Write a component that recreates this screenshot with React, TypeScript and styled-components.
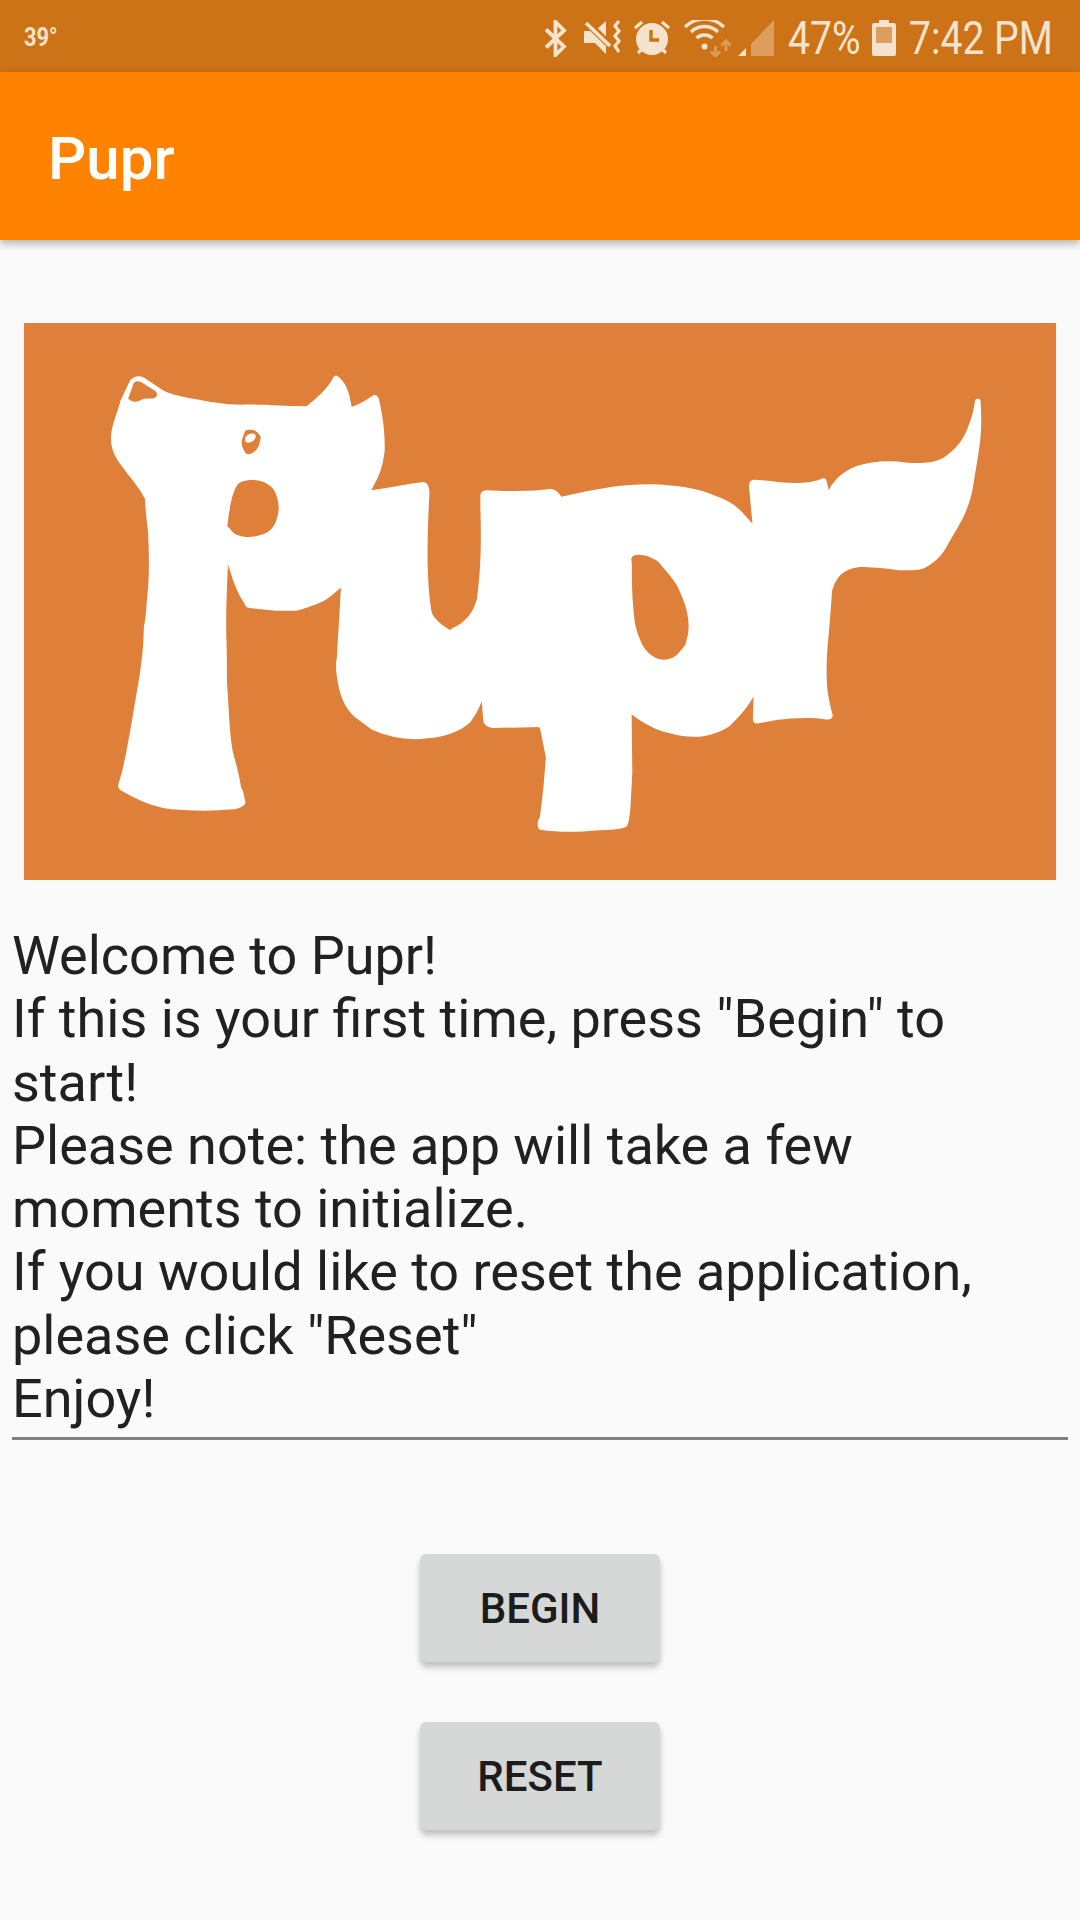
import React from "react";
import styled, { createGlobalStyle } from "styled-components";

const GlobalStyle = createGlobalStyle`
  html, body {
    margin: 0;
    padding: 0;
    background: #fafafa;
  }
  * {
    box-sizing: border-box;
  }
`;

const Screen = styled.div`
  width: 1080px;
  height: 1920px;
  background: #fafafa;
  font-family: Roboto, "Liberation Sans", sans-serif;
  overflow: hidden;
`;

const StatusBar = styled.div`
  height: 72px;
  background: #cb7316;
  color: #f6e3cd;
  display: flex;
  align-items: center;
  padding: 4px 28px 0 24px;
`;

const Temp = styled.span`
  font-size: 26px;
  font-weight: 700;
  width: 36px;
  margin-top: -2px;
  margin-right: auto;
  white-space: nowrap;
  transform: scaleX(0.84);
  transform-origin: left center;
`;

const StatusText = styled.span<{ $w: number; $ml: number }>`
  width: ${(p) => p.$w}px;
  margin-left: ${(p) => p.$ml}px;
  font-size: 46px;
  line-height: 52px;
  white-space: nowrap;
  transform: scaleX(0.85);
  transform-origin: left center;
`;

const StatusIcon = styled.svg<{ $ml?: number }>`
  display: block;
  flex: none;
  margin-left: ${(p) => p.$ml ?? 0}px;
`;

const AppBar = styled.header`
  height: 168px;
  background: #ff8300;
  box-shadow: 0 4px 8px rgba(0, 0, 0, 0.28);
  display: flex;
  align-items: center;
  padding: 4px 0 0 48px;
`;

const Title = styled.h1`
  margin: 0;
  color: #fff;
  font-size: 60px;
  font-weight: 500;
`;

const Content = styled.main`
  padding: 83px 12px 0;
`;

const Logo = styled.svg`
  display: block;
  width: 1032px;
  height: 557px;
  margin: 0 12px;
  background: #df803a;
`;

const Message = styled.div`
  margin-top: 44px;
  padding-bottom: 7px;
  border-bottom: 3px solid #808080;
  color: #212121;
  font-size: 54px;
  line-height: 63.3px;
`;

const Actions = styled.div`
  margin-top: 114px;
  display: flex;
  flex-direction: column;
  align-items: center;
  gap: 60px;
`;

const ActionButton = styled.button`
  width: 240px;
  height: 108px;
  border: 0;
  border-radius: 6px;
  background: #d6d7d7;
  color: #1c1c1c;
  font-family: inherit;
  font-size: 42px;
  font-weight: 500;
  box-shadow: 0 5px 6px rgba(0, 0, 0, 0.24);
`;

const DIM = "#dc9e5c";
const CREAM = "#f6e3cd";
const BAR = "#cb7316";

const StatusIcons = () => (
  <>
    <StatusIcon width={23} height={37} viewBox="0 0 23 37" fill="none" stroke={CREAM} strokeWidth={3.8}>
      <path d="M2 9.5 L20 26.5 L11.5 35 V2 L20 10.5 L2 27.5" />
    </StatusIcon>
    <StatusIcon $ml={17} width={38} height={36} viewBox="0 0 38 36" fill={CREAM}>
      <path d="M0 11 H11 L22 1 V34 L11 23 H0 Z" />
      <path d="M1 1 L28 27" stroke={BAR} strokeWidth={7} />
      <path d="M2 3 L26 26" stroke={CREAM} strokeWidth={3.6} />
      <path d="M35 1 L31 6 L35 11 L31 16 L35 21 L31 26 L35 32" fill="none" stroke={CREAM} strokeWidth={3.2} />
    </StatusIcon>
    <StatusIcon $ml={12} width={36} height={36} viewBox="0 0 36 36" fill={CREAM}>
      <circle cx="18" cy="19" r="16" />
      <path d="M1 8 L8 2 M28 2 L35 8 M4 33 L8 29 M28 29 L32 33" stroke={CREAM} strokeWidth={3.2} />
      <path d="M17 10 V20 H25" fill="none" stroke={BAR} strokeWidth={3.4} />
    </StatusIcon>
    <StatusIcon $ml={14} width={48} height={37} viewBox="0 0 48 37" fill="none">
      <circle cx="20.5" cy="26.5" r="3" fill={CREAM} />
      <path d="M12.5 18 A12 12 0 0 1 28.5 18 M7 12 A19.5 19.5 0 0 1 34 12 M1 7 A28 28 0 0 1 40 7" stroke={CREAM} strokeWidth={3.4} />
      <path d="M31.5 26 V36 M27 31.5 L31.5 36 L36 31.5 M42 31 V21 M37.5 25.5 L42 21 L46.5 25.5" stroke={DIM} strokeWidth={2.8} />
    </StatusIcon>
    <StatusIcon $ml={6} width={36} height={36} viewBox="0 0 36 36">
      <path d="M13 36 V24 L36 0 V36 Z" fill={DIM} />
      <path d="M0 36 L8 28 V36 Z" fill={CREAM} />
    </StatusIcon>
    <StatusText $w={70} $ml={14}>47%</StatusText>
    <StatusIcon $ml={14} width={24} height={36} viewBox="0 0 24 36">
      <path d="M7 0 H17 V3 H22 Q24 3 24 5 V34 Q24 36 22 36 H2 Q0 36 0 34 V5 Q0 3 2 3 H7 Z" fill={CREAM} />
      <rect x="4" y="7" width="16" height="16" fill={DIM} />
    </StatusIcon>
    <StatusText $w={143} $ml={13}>7:42 PM</StatusText>
  </>
);

// traced from the reference in two halves that meet at x=540
const PuprLogo = () => (
  <Logo viewBox="24 323 1032 557">
    <g transform="translate(0 310) scale(0.3444 0.3699)">
      <path
        fill="#fff"
        d="M378 190 C390 178 405 176 420 184 L465 212 C490 228 520 232 560 240 C610 248 650 256 700 256 C770 254 840 262 890 260 C920 238 950 215 968 182 C972 176 978 176 985 182 C1010 205 1015 230 1021 262 C1045 255 1065 243 1085 230 C1092 228 1098 232 1100 240 C1112 290 1118 330 1117 380 C1112 420 1104 445 1078 487 C1130 482 1180 470 1230 465 C1240 466 1248 478 1247 495 C1243 560 1240 640 1242 700 C1244 750 1248 790 1254 820 C1265 840 1285 853 1307 865 C1320 855 1330 855 1345 842 C1365 828 1378 805 1385 780 C1392 730 1396 680 1396 620 C1397 580 1394 540 1395 500 C1397 490 1405 487 1415 487 C1460 490 1520 490 1575 487 L1575 1127 L1430 1130 C1415 1128 1405 1122 1403 1110 L1399 1058 C1390 1080 1378 1100 1365 1115 C1335 1140 1290 1155 1240 1158 C1190 1166 1130 1155 1080 1135 L1030 1100 C1000 1075 985 1040 978 990 C975 970 975 955 978 940 L985 830 L990 750 C970 765 950 785 925 793 C900 802 885 808 860 813 L800 813 L720 805 C712 802 710 795 708 790 C685 760 675 725 662 688 C658 760 656 830 657 880 C660 950 658 980 660 1020 C665 1080 665 1130 675 1190 C685 1225 695 1260 700 1290 C708 1300 708 1315 713 1330 C712 1340 700 1345 680 1350 C620 1355 560 1355 500 1350 C450 1345 400 1325 350 1298 C342 1292 342 1285 346 1275 C360 1235 370 1180 385 1100 C395 1040 410 980 416 900 L418 855 C425 830 425 790 430 750 C434 700 432 640 430 600 C426 570 422 540 421 510 C400 475 380 455 360 430 C340 405 322 385 322 345 C324 310 340 280 350 245 Z"
      />
      <path
        fill="#df803a"
        d="M388 198 C395 190 405 192 415 198 L450 218 C458 225 458 232 450 237 C440 242 425 236 412 242 C398 250 385 250 372 240 Z"
      />
      <path
        fill="#df803a"
        d="M712 326 C725 322 740 322 748 332 L757 342 C755 360 750 375 740 382 C730 390 718 393 712 385 C705 375 700 365 702 352 Z"
      />
      <path fill="#fff" d="M712 345 C718 335 735 330 742 338 C745 350 730 360 718 358 C712 358 710 352 712 345 Z" />
      <path
        fill="#df803a"
        d="M690 472 C705 456 755 456 775 470 C790 478 798 488 802 500 C810 520 812 540 805 560 C798 585 785 598 768 605 C745 613 715 618 690 608 C675 605 670 590 660 585 C665 545 672 495 690 472 Z"
      />
    </g>
    <g transform="translate(540 310) scale(0.3444 0.3699)">
      <path
        fill="#fff"
        d="M-5 487 L30 484 C45 484 55 495 62 505 C110 495 160 485 210 478 C260 472 320 468 370 474 C420 478 470 485 510 503 C540 512 565 525 585 545 L617 578 L607 480 C606 465 612 458 625 459 C660 460 700 468 740 468 C770 467 800 465 815 457 C825 452 832 456 833 465 L838 487 C855 460 880 435 920 422 C960 410 1010 405 1060 412 C1100 415 1140 415 1170 400 C1205 380 1235 345 1245 310 C1255 290 1260 265 1263 245 C1266 238 1276 238 1279 245 C1282 280 1282 320 1278 355 C1270 410 1262 450 1257 480 C1250 515 1240 540 1225 568 C1210 595 1195 615 1179 643 C1165 665 1150 678 1132 689 C1115 700 1105 703 1089 703 C1060 705 1040 703 1031 702 C990 698 960 695 929 695 C905 697 885 705 871 718 C858 732 852 745 848 760 C845 800 842 840 838 880 C832 930 830 990 835 1030 C840 1060 845 1080 850 1095 C850 1105 842 1108 830 1107 C790 1100 730 1103 690 1108 L630 1118 C622 1118 618 1112 618 1105 L620 1045 C605 1070 585 1095 550 1125 C525 1140 500 1148 470 1153 C440 1155 410 1153 380 1145 C340 1138 300 1118 266 1093 L268 1250 L263 1340 C260 1370 258 1390 250 1397 C235 1405 200 1405 160 1407 C110 1412 50 1412 0 1405 C-8 1402 -10 1385 0 1370 L10 1290 L17 1210 L0 1130 L-5 1127 Z"
      />
      <path
        fill="#df803a"
        d="M265 672 C270 660 285 660 305 664 C325 670 335 675 345 682 C365 705 385 725 398 745 C410 770 420 790 425 810 C432 835 433 860 430 875 L422 905 C410 920 398 935 385 940 C370 947 350 947 335 940 C315 930 300 915 290 890 C280 865 275 850 273 825 C268 780 266 740 267 690 Z"
      />
    </g>
  </Logo>
);

export default function App() {
  return (
    <Screen>
      <GlobalStyle />
      <StatusBar>
        <Temp>39°</Temp>
        <StatusIcons />
      </StatusBar>
      <AppBar>
        <Title>Pupr</Title>
      </AppBar>
      <Content>
        <PuprLogo />
        <Message>
          Welcome to Pupr!
          <br />
          If this is your first time, press "Begin" to start!
          <br />
          Please note: the app will take a few moments to initialize.
          <br />
          If you would like to reset the application, please click "Reset"
          <br />
          Enjoy!
        </Message>
        <Actions>
          <ActionButton>BEGIN</ActionButton>
          <ActionButton>RESET</ActionButton>
        </Actions>
      </Content>
    </Screen>
  );
}
